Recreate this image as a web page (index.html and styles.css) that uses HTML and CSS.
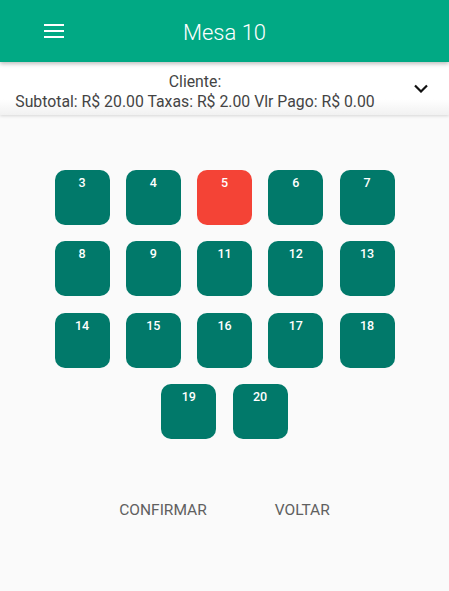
FILE: index.html
```html
<!DOCTYPE html>
<html lang="pt">
<head>
    <meta charset="UTF-8">
    <meta name="viewport" content="width=device-width, initial-scale=1.0">
    <title>Mesa 10</title>
    <link rel="stylesheet" href="styles.css">
</head>
<body>
    <header class="toolbar">
        <span class="menu-icon">
            <svg width="20" height="14" viewBox="0 0 20 14"><path d="M0 1h20M0 7h20M0 13h20" stroke="#fff" stroke-width="2"/></svg>
        </span>
        <h1>Mesa 10</h1>
    </header>

    <div class="client-panel">
        <div class="client-info">
            <p>Cliente:</p>
            <p>Subtotal: R$ 20.00 Taxas: R$ 2.00 Vlr Pago: R$ 0.00</p>
        </div>
        <span class="chevron">
            <svg width="14" height="9" viewBox="0 0 14 9"><path d="M1 1.5l6 6 6-6" fill="none" stroke="#111" stroke-width="2.2"/></svg>
        </span>
    </div>

    <div class="tables">
        <div class="table">3</div>
        <div class="table">4</div>
        <div class="table busy">5</div>
        <div class="table">6</div>
        <div class="table">7</div>
        <div class="table">8</div>
        <div class="table">9</div>
        <div class="table">11</div>
        <div class="table">12</div>
        <div class="table">13</div>
        <div class="table">14</div>
        <div class="table">15</div>
        <div class="table">16</div>
        <div class="table">17</div>
        <div class="table">18</div>
        <div class="table">19</div>
        <div class="table">20</div>
    </div>

    <div class="actions">
        <button>Confirmar</button>
        <button>Voltar</button>
    </div>
</body>
</html>
```

FILE: styles.css
```css
body {
    font-family: Roboto, 'Noto Sans', sans-serif;
    margin: 0;
    min-height: 100vh;
    background-color: #fafafa;
    color: #333;
}

.toolbar {
    display: flex;
    align-items: center;
    height: 62px;
    background-color: #01a984;
    box-shadow: 0 2px 4px rgba(0, 0, 0, 0.25);
    position: relative;
    z-index: 2;
}

.menu-icon {
    display: flex;
    width: 20px;
    margin-left: 44px;
}

.toolbar h1 {
    flex: 1;
    margin: 0 64px 0 0;
    text-align: center;
    font-size: 22px;
    font-weight: 300;
    color: #fff;
    padding-top: 2px;
}

.client-panel {
    display: flex;
    align-items: center;
    height: 53px;
    background-color: #fff;
    box-shadow: 0 1px 3px rgba(0, 0, 0, 0.15);
    background-image: linear-gradient(to bottom, #fff 70%, #f1f1f1);
}

.client-info {
    flex: 1;
    text-align: center;
    padding-top: 6px;
}

.client-info p {
    margin: 0;
    font-size: 15.8px;
    line-height: 20px;
    color: #444;
}

.chevron {
    display: flex;
    width: 14px;
    margin: 0 21px 0 24px;
}

.tables {
    display: flex;
    flex-wrap: wrap;
    justify-content: center;
    gap: 16.4px 16.25px;
    width: 341px;
    margin: 55px auto 0;
}

.table {
    width: 55px;
    height: 55px;
    border-radius: 10px;
    background-color: #01796a;
    color: #fff;
    font-size: 12.5px;
    font-weight: 500;
    text-align: center;
    padding-top: 5px;
    box-sizing: border-box;
}

.table.busy {
    background-color: #f44336;
}

.actions {
    display: flex;
    justify-content: center;
    gap: 36px;
    margin-top: 54px;
}

.actions button {
    background: none;
    border: none;
    padding: 8px 16px;
    font-family: Roboto, sans-serif;
    font-size: 15.5px;
    color: #606060;
    text-transform: uppercase;
}
```
